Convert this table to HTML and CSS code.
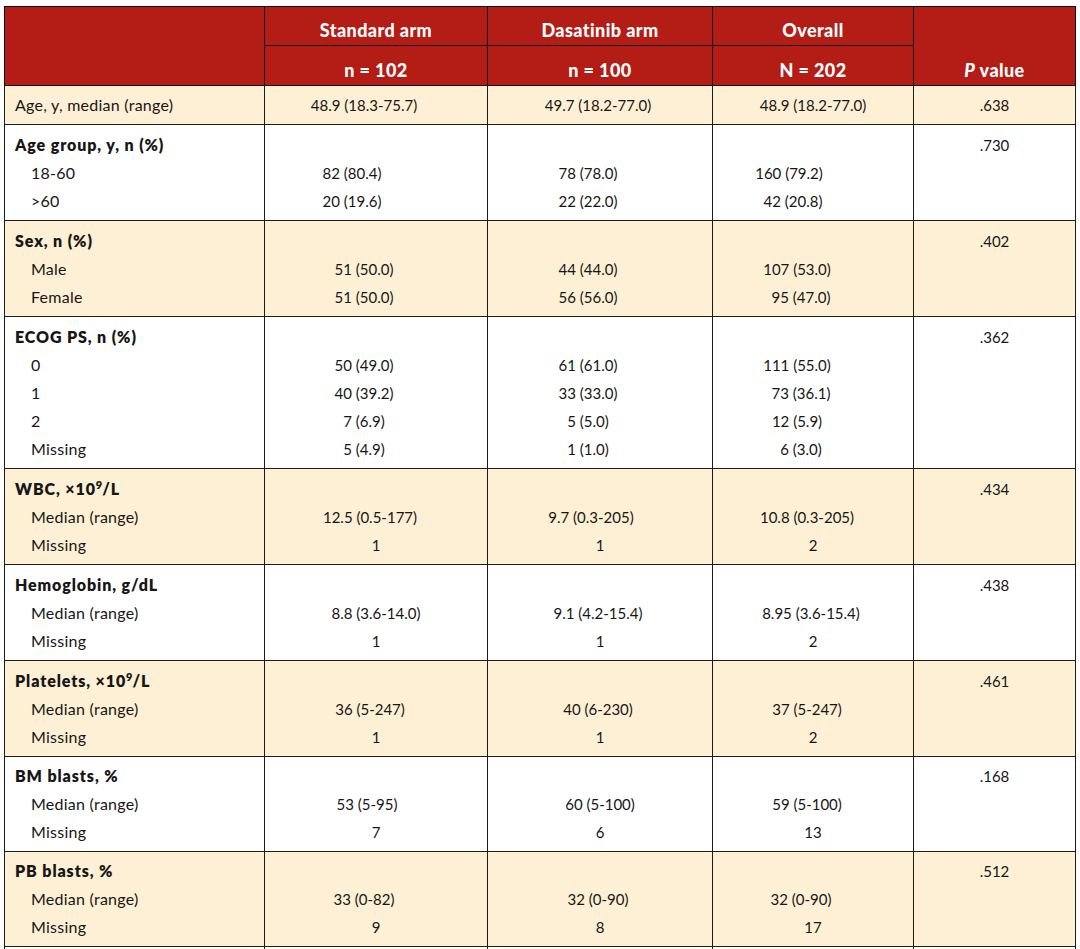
FILE: index.html
```html
<!DOCTYPE html>
<html lang="en">
<head>
<meta charset="utf-8">
<title>Patient characteristics</title>
<link rel="stylesheet" href="styles.css">
</head>
<body>
<table class="tbl">
  <colgroup>
    <col class="c-label"><col class="c-std"><col class="c-das"><col class="c-all"><col class="c-p">
  </colgroup>
  <thead>
    <tr class="h1">
      <th rowspan="2"></th>
      <th>Standard arm</th>
      <th>Dasatinib arm</th>
      <th>Overall</th>
      <th rowspan="2" class="pv"><i>P</i> value</th>
    </tr>
    <tr class="h2">
      <th>n = 102</th>
      <th>n = 100</th>
      <th>N = 202</th>
    </tr>
  </thead>
  <tbody>
    <tr class="beige single">
      <td class="lab"><div class="ln">Age, y, median (range)</div></td>
      <td><div class="ln o12">48.9 (18.3-75.7)</div></td>
      <td><div class="ln o2">49.7 (18.2-77.0)</div></td>
      <td><div class="ln">48.9 (18.2-77.0)</div></td>
      <td><div class="ln">.638</div></td>
    </tr>
    <tr class="white">
      <td class="lab"><div class="ln hd">Age group, y, n (%)</div><div class="ln sub">18-60</div><div class="ln sub">&gt;60</div></td>
      <td><div class="ln"></div><div class="ln o24">82 (80.4)</div><div class="ln o24">20 (19.6)</div></td>
      <td><div class="ln"></div><div class="ln o12">78 (78.0)</div><div class="ln o12">22 (22.0)</div></td>
      <td><div class="ln"></div><div class="ln o24">160 (79.2)</div><div class="ln o20">42 (20.8)</div></td>
      <td><div class="ln">.730</div></td>
    </tr>
    <tr class="beige">
      <td class="lab"><div class="ln hd">Sex, n (%)</div><div class="ln sub">Male</div><div class="ln sub">Female</div></td>
      <td><div class="ln"></div><div class="ln o12">51 (50.0)</div><div class="ln o12">51 (50.0)</div></td>
      <td><div class="ln"></div><div class="ln o12">44 (44.0)</div><div class="ln o12">56 (56.0)</div></td>
      <td><div class="ln"></div><div class="ln o16">107 (53.0)</div><div class="ln o12">95 (47.0)</div></td>
      <td><div class="ln">.402</div></td>
    </tr>
    <tr class="white">
      <td class="lab"><div class="ln hd">ECOG PS, n (%)</div><div class="ln sub">0</div><div class="ln sub">1</div><div class="ln sub">2</div><div class="ln sub">Missing</div></td>
      <td><div class="ln"></div><div class="ln o12">50 (49.0)</div><div class="ln o12">40 (39.2)</div><div class="ln o12">7 (6.9)</div><div class="ln o12">5 (4.9)</div></td>
      <td><div class="ln"></div><div class="ln o12">61 (61.0)</div><div class="ln o12">33 (33.0)</div><div class="ln o12">5 (5.0)</div><div class="ln o12">1 (1.0)</div></td>
      <td><div class="ln"></div><div class="ln o16">111 (55.0)</div><div class="ln o12">73 (36.1)</div><div class="ln o16">12 (5.9)</div><div class="ln o12">6 (3.0)</div></td>
      <td><div class="ln">.362</div></td>
    </tr>
    <tr class="beige">
      <td class="lab"><div class="ln hd">WBC, ×10<sup>9</sup>/L</div><div class="ln sub">Median (range)</div><div class="ln sub">Missing</div></td>
      <td><div class="ln"></div><div class="ln o6">12.5 (0.5-177)</div><div class="ln">1</div></td>
      <td><div class="ln"></div><div class="ln o9">9.7 (0.3-205)</div><div class="ln">1</div></td>
      <td><div class="ln"></div><div class="ln o6">10.8 (0.3-205)</div><div class="ln">2</div></td>
      <td><div class="ln">.434</div></td>
    </tr>
    <tr class="white">
      <td class="lab"><div class="ln hd">Hemoglobin, g/dL</div><div class="ln sub">Median (range)</div><div class="ln sub">Missing</div></td>
      <td><div class="ln"></div><div class="ln">8.8 (3.6-14.0)</div><div class="ln">1</div></td>
      <td><div class="ln"></div><div class="ln o2">9.1 (4.2-15.4)</div><div class="ln">1</div></td>
      <td><div class="ln"></div><div class="ln o2">8.95 (3.6-15.4)</div><div class="ln">2</div></td>
      <td><div class="ln">.438</div></td>
    </tr>
    <tr class="beige">
      <td class="lab"><div class="ln hd">Platelets, ×10<sup>9</sup>/L</div><div class="ln sub">Median (range)</div><div class="ln sub">Missing</div></td>
      <td><div class="ln"></div><div class="ln o6">36 (5-247)</div><div class="ln">1</div></td>
      <td><div class="ln"></div><div class="ln o2">40 (6-230)</div><div class="ln">1</div></td>
      <td><div class="ln"></div><div class="ln o6">37 (5-247)</div><div class="ln">2</div></td>
      <td><div class="ln">.461</div></td>
    </tr>
    <tr class="white tight">
      <td class="lab"><div class="ln hd">BM blasts, %</div><div class="ln sub">Median (range)</div><div class="ln sub">Missing</div></td>
      <td><div class="ln"></div><div class="ln o9">53 (5-95)</div><div class="ln">7</div></td>
      <td><div class="ln"></div><div class="ln">60 (5-100)</div><div class="ln">6</div></td>
      <td><div class="ln"></div><div class="ln o6">59 (5-100)</div><div class="ln">13</div></td>
      <td><div class="ln">.168</div></td>
    </tr>
    <tr class="beige tight">
      <td class="lab"><div class="ln hd">PB blasts, %</div><div class="ln sub">Median (range)</div><div class="ln sub">Missing</div></td>
      <td><div class="ln"></div><div class="ln o12">33 (0-82)</div><div class="ln">9</div></td>
      <td><div class="ln"></div><div class="ln o2">32 (0-90)</div><div class="ln">8</div></td>
      <td><div class="ln"></div><div class="ln o12">32 (0-90)</div><div class="ln">17</div></td>
      <td><div class="ln">.512</div></td>
    </tr>
    <tr class="white">
      <td class="lab"><div class="ln hd">&nbsp;</div></td>
      <td><div class="ln"></div></td>
      <td><div class="ln"></div></td>
      <td><div class="ln"></div></td>
      <td><div class="ln"></div></td>
    </tr>
  </tbody>
</table>
</body>
</html>
```

FILE: styles.css
```css
html, body {
  margin: 0;
  padding: 0;
  background: #ffffff;
}
body {
  padding: 6px 0 0 4px;
  font-family: Lato, "Open Sans", "Liberation Sans", sans-serif;
  color: #161616;
  font-size: 15px;
}
.tbl {
  border-collapse: collapse;
  table-layout: fixed;
  width: 1071px;
  border: 1px solid #2a1a1a;
}
.c-label { width: 260px; }
.c-std { width: 223px; }
.c-das { width: 225px; }
.c-all { width: 201px; }
.c-p { width: 162px; }

thead th {
  background: #b41c16;
  color: #ffffff;
  font-weight: 900;
  font-size: 18px;
  letter-spacing: 0.4px;
  line-height: 20px;
  height: 39px;
  padding: 0 0 5px;
  border: 1px solid #111111;
  vertical-align: bottom;
  text-align: center;
  box-sizing: border-box;
}
thead th i { font-style: italic; }
thead .h2 th { padding-bottom: 5px; height: 40px; }

tbody td {
  border: 1px solid #1c1c1c;
  padding: 6px 0 5px;
  vertical-align: top;
  text-align: center;
}
tbody tr.single td { padding-top: 5px; }
tbody tr.tight td { padding-top: 5px; }
tbody tr.beige td { background: #fef0d4; }
tbody tr.white td { background: #ffffff; }

.ln {
  height: 28px;
  line-height: 28px;
  white-space: nowrap;
}
tbody td.lab {
  text-align: left;
  padding-left: 10px;
  font-size: 16px;
  letter-spacing: 0.25px;
}
.lab .hd {
  font-weight: 800;
  letter-spacing: 0.9px;
}
.lab .sub { padding-left: 16px; }
sup {
  font-size: 11px;
  line-height: 0;
  vertical-align: 6px;
  letter-spacing: 0;
}

.o2 { padding-right: 4px; }
.o6 { padding-right: 12px; }
.o9 { padding-right: 18px; }
.o12 { padding-right: 24px; }
.o16 { padding-right: 32px; }
.o20 { padding-right: 40px; }
.o24 { padding-right: 48px; }
```
